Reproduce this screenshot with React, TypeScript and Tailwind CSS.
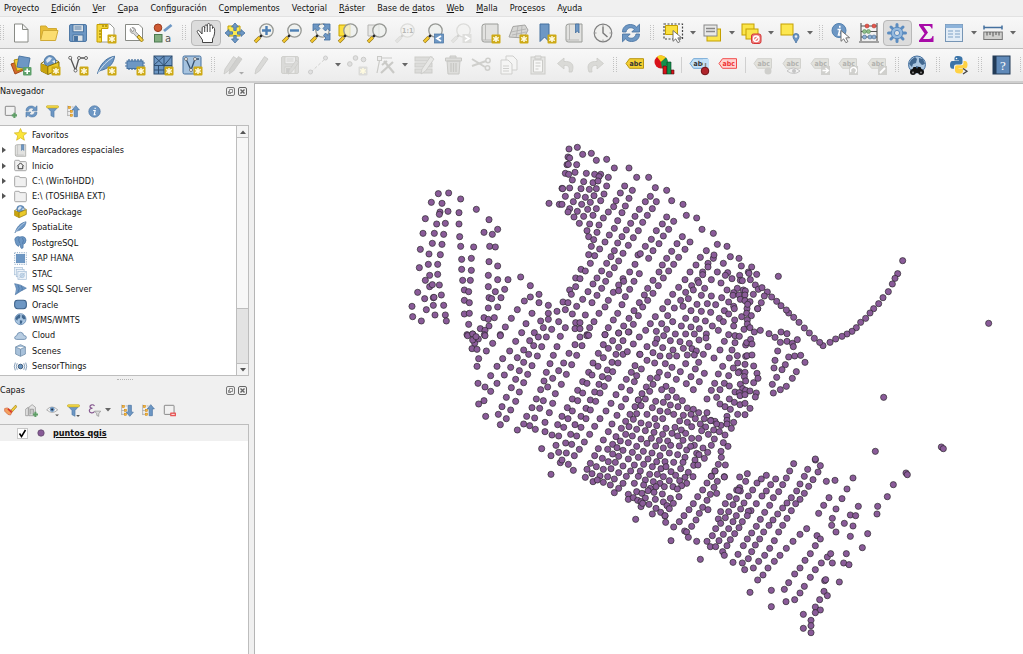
import React from "react";
import clsx from "clsx";

const BLUE = "#6d97c4";
const NAVY = "#44709f";
const GOLD = "#fce94f";
const OCHRE = "#c4a000";
const GREY = "#dadad8";
const MID = "#9a9c98";

/* ---------- shared icon parts ---------- */

const NewBadge = ({ dim }: { dim?: boolean }) => (
  <g>
    <rect x="11.5" y="11.5" width="9" height="9" rx="1" fill={dim ? "#dcdcd9" : "#cda915"} stroke="none" />
    <path
      d="M16 12.9v6.2M13.2 14.4l5.6 3.2M18.800 14.4l-5.6 3.2"
      stroke="#fffbe0"
      strokeWidth="1.5"
    />
  </g>
);

const Lens = ({ dim, children }: { dim?: boolean; children?: React.ReactNode }) => (
  <g>
    <circle cx="12.5" cy="7.5" r="6.7" fill={dim ? "#f3f3f2" : "#eef0ee"} fillOpacity=".75" stroke={dim ? "#dcdcda" : "#969894"} strokeWidth="1.3" />
    <path d="M7.8 12.2l-1.8 1.8" stroke={dim ? "#d0d0ce" : "#222"} strokeWidth="2.4" />
    <path d="M5.8 14.2L1 19" stroke={dim ? "#d8d8d6" : "#8f7414"} strokeWidth="3.4" />
    <path d="M5.6 14.4L1.3 18.7" stroke={dim ? "#e4e4e2" : "#f6c92f"} strokeWidth="2.2" />
    {children}
  </g>
);

const Tag = ({ fill, line, ink }: { fill: string; line: string; ink: string }) => (
  <g>
    <path d="M1 8.500L4.500 3.700H18.500V13.300H4.500Z" fill={fill} stroke={line} />
    <text x="4.500" y="11" fontSize="7" fontWeight="700" fill={ink} fontFamily="DejaVu Sans Condensed">
      abc
    </text>
  </g>
);

const Cursor = () => (
  <path d="M10 7.5v10.8l2.7-2.4 2.2 3.8 2-1.1-2.1-3.7 3.8-.2z" fill="#fff" stroke="#666" strokeWidth=".9" />
);

const Disk = ({ dim }: { dim?: boolean }) => (
  <g stroke={dim ? "#cececb" : NAVY} strokeWidth=".9">
    <rect x="1.5" y="1.5" width="17" height="17" rx="1.5" fill={dim ? GREY : BLUE} />
    <rect x="5" y="1.8" width="10.5" height="7" fill={dim ? "#eee" : "#dfe4e8"} />
    <path d="M6.5 4h7M6.5 6h7" />
    <rect x="5" y="12" width="10" height="6.3" fill={dim ? "#eee" : "#dfe4e8"} />
    <rect x="6.5" y="13.5" width="3" height="4" fill={dim ? "#ccc" : NAVY} />
  </g>
);

const Feather = () => (
  <g>
    <path d="M1.5 18.5C4 10 9 3 18.5 1.2c-.5 6-4 11-11.5 13.6-2.2.7-4 .8-5.5 3.7z" fill={BLUE} stroke={NAVY} />
    <path d="M2 18C6 11 11 6 17.5 2" fill="none" stroke="#d9e6f2" strokeWidth=".9" />
  </g>
);

const Chip = () => (
  <g>
    <path d="M4 4v11M7 4v11M10 4v11M13 4v11M16 4v11" stroke={NAVY} strokeWidth="1.3" />
    <rect x="2" y="6" width="16" height="7.5" fill={BLUE} stroke={NAVY} />
    <path d="M0 8h2M0 11h2M18 8h2M18 11h2" stroke={NAVY} />
  </g>
);

const Funnel = ({ menu }: { menu?: boolean }) => (
  <g>
    <path d="M1 2.5H19L12.4 10V19L7.6 16.5V10Z" fill={BLUE} stroke={NAVY} strokeWidth=".8" />
    <rect x="1" y="1" width="18" height="3.5" rx="1" fill="#f2d94a" stroke={OCHRE} strokeWidth=".8" />
    {menu && <path d="M14 17h6l-3 3z" fill="#555" />}
  </g>
);

const Refresh = () => (
  <g fill={BLUE} stroke={NAVY} strokeWidth=".8">
    <path d="M1.500 9C1.500 4 5 1.500 9.500 1.500c2.600 0 4.600 1 6 2.600L18.500 1.200V9H10.800l2.600-2.700C11 3.700 6 4.200 5 9z" />
    <path d="M18.500 11c0 5-3.500 7.500-8 7.500-2.600 0-4.600-1-6-2.600L1.500 18.800V11H9.200l-2.600 2.700c2.400 2.600 7.400 2.100 8.400-2.700z" />
  </g>
);

const Box = () => (
  <g>
    <circle cx="10" cy="6.5" r="5.8" fill={BLUE} stroke={NAVY} />
    <path d="M6 5l3-3 3 1-2 3-3 2zM12 6l3-1v4z" fill="#dde8f2" />
    <path d="M1 8.5L7.5 11.5 19 7v7.5L8 19.5 1 16Z" fill="#eac92a" stroke="#7d6500" strokeWidth=".9" />
    <path d="M1 8.5L7.8 11.5V19.3L1 16Z" fill="#c9a40f" />
    <path d="M7.8 11.5V19M1 8.5l3-2M19 7l-3-2" stroke="#7d6500" strokeWidth=".9" />
  </g>
);

const Globe = () => (
  <g>
    <circle cx="10" cy="9.5" r="8.5" fill="#a9c5e0" stroke={NAVY} />
    <path d="M4 5l4-3 2 2-1 4-3 1-1 3-3-3zM12 3l4 1 2 5-3 1-3-3zM9 11l4 1-1 4-3 1z" fill="#41678f" />
  </g>
);

const Bookmark = ({ ribbon }: { ribbon?: boolean }) => (
  <g>
    <path d="M2 3.5Q2 1 5 1H18V19H4.5Q2 19 2 17Z" fill="#e2e2e0" stroke={MID} />
    <path d="M5.500 1V17M2 17H15" stroke="#b5b5b3" strokeWidth=".9" />
    {ribbon && <path d="M11.500 1h3.500v9l-1.700-2.200-1.800 2.200z" fill={BLUE} stroke={NAVY} strokeWidth=".8" />}
  </g>
);

const Pencil = ({ color = "#dadad8" }: { color?: string }) => (
  <path d="M3 19l1-5L12.5 1.5 16 4 7.5 16z" fill={color} stroke="#c9c9c6" strokeWidth=".8" />
);

const TreeArrow = ({ up }: { up?: boolean }) => (
  <g>
    <path d="M1 1v16M1 10h4M1 16h4M7 3h3" stroke="#999" />
    <g fill="#f4b63f" stroke="#c67d00" strokeWidth=".7">
      <rect x="2" y="2" width="3.5" height="3.5" />
      <rect x="5" y="8" width="3.5" height="3.5" />
      <rect x="5" y="14" width="3.5" height="3.5" />
    </g>
    <path
      d={up ? "M13.5 1l5.500 6.500h-3V18h-5V7.500H8z" : "M13.5 19l5.500-6.500h-3V2h-5v10.500H8z"}
      fill={BLUE}
      stroke={NAVY}
    />
  </g>
);

const Info = () => (
  <g>
    <circle cx="10" cy="10" r="8.8" fill={BLUE} stroke={NAVY} />
    <path d="M8 8.5h3L9.500 15h2.500M11 4.200v2" stroke="#fff" strokeWidth="1.800" fill="none" />
  </g>
);

const Folder = ({ home }: { home?: boolean }) => (
  <g>
    <path d="M1 3.5Q1 2 2.5 2H8l1 2h8.5Q19 4 19 5.5V16.5Q19 18 17.5 18h-15Q1 18 1 16.5Z" fill="#f0f0f0" stroke="#999" strokeWidth="1.3" />
    {home && <path d="M5 11l5-5 5 5M6.5 10.5V15h7v-4.5" fill="none" stroke="#333" strokeWidth="1.5" />}
  </g>
);

const Undo = () => (
  <path d="M8 3L1.5 8.5 8 14v-3.5c4-.5 6 1 5 6.5h3C19 9 15 6 8 6.5z" fill="#dadad7" stroke="#cccbc8" strokeWidth=".8" />
);

const DimTag = ({ children }: { children?: React.ReactNode }) => (
  <g>
    <Tag fill="#e2e2dd" line="#d2d2ce" ink="#b2b2af" />
    {children}
  </g>
);

/* ---------- icon table, every drawing on a 20 x 20 grid ---------- */

const icons: Record<string, React.ReactNode> = {
  page: <path d="M3.5 1H11.5L17 6.5V19H3.5ZM11.5 1V6.5H17" fill="#fff" stroke="#888a85" />,
  open: (
    <g stroke="#d0aa35">
      <path d="M1.5 16V3H7l2 2.5h8.5V8" fill="#e8bd35" />
      <path d="M1.5 17.5L4 7.5H19L16.5 17.5Z" fill="#fbdd70" />
    </g>
  ),
  save: <Disk />,
  layoutNew: (
    <g>
      <path d="M3 1h11l4 4v14H3z" fill="#fff" stroke={MID} />
      <path d="M1 1.5h11v4H5.5V19H1z" fill="#f5d63b" stroke={OCHRE} />
      <path d="M3 8h2M3 11h2M3 14h2M7 2v2M10 2v2" stroke="#7d6800" />
      <NewBadge />
    </g>
  ),
  layouts: (
    <g>
      <path d="M1.5 1.5H15l3.5 3.5V17.5H1.5Z" fill="#fff" stroke="#888a85" />
      <path d="M6.5 5.5c-1 3 .5 5 3 5l7 7.500 2-2-7-7.500c.5-2.500-1-4-3.500-4l2 2-1.500 2.500z" fill="#d7d7d5" stroke="#888" strokeWidth=".8" />
      <path d="M13 14l2-2 4.500 5-2 2z" fill="#f5cf45" stroke="#8e7200" strokeWidth=".8" />
    </g>
  ),
  styles: (
    <g>
      <circle cx="5" cy="4.8" r="3.8" fill="#cf5a33" stroke="#98391c" />
      <path d="M11 8l7.5-6" stroke={BLUE} strokeWidth="2.8" />
      <rect x="1.5" y="11.5" width="7.5" height="7.5" fill="#82ad7f" stroke="#4b7950" />
      <text x="12" y="19" fontSize="10" fill="#555" fontFamily="DejaVu Sans">a</text>
    </g>
  ),
  hand: (
    <path
      d="M6 11L3.500 8c-1.500-1.500-3 0-2 1.500L6.500 17v2.500h10V16c2-3 2.500-7 2-10.500-.3-1.600-2-1.400-2 0V3.500c0-2-2.500-2-2.500 0V2c0-2-2.700-2-2.700 0v1.500c0-2-2.600-2-2.600 0V5c0-2-2.500-2-2.500 0zM8.700 4.500V9M11.300 3.500V9M14 4V9"
      fill="#fff"
      stroke="#444"
    />
  ),
  panTo: (
    <g>
      <path d="M3 3h12v10H3z" fill={GOLD} stroke={OCHRE} />
      <path
        d="M10 0l3.5 4h-2.300v3.500h-2.400V4H6.500zM10 20l3.500-4h-2.300v-3.500h-2.400V16H6.500zM0 10l4-3.500v2.300h3.500v2.400H4v2.300zM20 10l-4-3.500v2.300h-3.500v2.400H16v2.300z"
        fill={BLUE}
        stroke={NAVY}
        strokeWidth=".8"
      />
    </g>
  ),
  zoomIn: <Lens><path d="M12.5 3v9M8 7.5h9" stroke="#4d7fb4" strokeWidth="2.4" /></Lens>,
  zoomOut: <Lens><path d="M8 7.5h9" stroke="#4d7fb4" strokeWidth="2.4" /></Lens>,
  zoomFull: (
    <Lens>
      <path d="M3 1h7L7.800 3 10 5.500 7.500 8 5.200 5.500 3 8zM20 1h-7l2.200 2L13 5.500l2.500 2.500L17.800 5.500 20 8zM20 17h-6l2-2-2.500-2.500L15.500 10l2.500 2.500L20 10z" fill={BLUE} stroke={NAVY} strokeWidth=".8" />
    </Lens>
  ),
  zoomSel: <g><path d="M1 2h11v11H1z" fill="#fde03a" stroke={OCHRE} /><Lens /></g>,
  zoomLayer: <g><path d="M1 2h11v11H1z" fill="#e8e8e6" stroke="#b5b5b3" /><Lens /></g>,
  zoomNative: (
    <Lens dim>
      <text x="7" y="10" fontSize="7" fontWeight="700" fill="#b8b8b6" fontFamily="DejaVu Sans Condensed">1:1</text>
    </Lens>
  ),
  zoomLast: (
    <Lens>
      <rect x="11.5" y="11" width="9" height="9" fill={BLUE} stroke={NAVY} strokeWidth=".7" />
      <path d="M18 13l-4 2.5 4 2.5" fill="none" stroke="#fff" strokeWidth="1.8" />
    </Lens>
  ),
  zoomNext: (
    <Lens dim>
      <rect x="11.5" y="11" width="9" height="9" fill="#dededc" />
      <path d="M14 13l4 2.5-4 2.5" fill="none" stroke="#fff" strokeWidth="1.8" />
    </Lens>
  ),
  mapNew: <g><Bookmark /><NewBadge /></g>,
  mesh3d: (
    <g>
      <path d="M1 14L5 3.5 17 2l3 5-4 8z" fill="#d6d6d4" stroke="#a5a5a3" />
      <path d="M3 9l15-3M10 3l-2 12M4 12l14-3M14 2.5l-1 12" stroke="#aaa" strokeWidth=".7" />
      <NewBadge />
    </g>
  ),
  bookmarkNew: <g><path d="M4 1H13V18.500L8.500 14 4 18.500Z" fill={BLUE} stroke={NAVY} /><NewBadge /></g>,
  bookmarks: <Bookmark ribbon />,
  clock: (
    <g fill="none">
      <circle cx="10" cy="10" r="8.8" fill="#f0f0ee" stroke="#808080" strokeWidth="1.2" />
      <path d="M10 3.5V10l4.5 4" stroke="#777" strokeWidth="1.4" />
      <path d="M10 1.5v2M10 16.5v2M1.5 10h2M16.5 10h2" stroke="#999" />
    </g>
  ),
  refresh: <Refresh />,
  select: (
    <g>
      <path d="M1 1H19.5V16H1Z" fill="none" stroke="#444" strokeWidth="1.2" strokeDasharray="2 1.5" />
      <path d="M2.5 2.5h12v9h-12z" fill="#fbe03e" stroke={OCHRE} />
      <Cursor />
    </g>
  ),
  selectForm: (
    <g>
      <rect x="5" y="6" width="13.5" height="12" fill="#fbe54a" stroke={OCHRE} />
      <rect x="2" y="2" width="13" height="11" fill="#e8e9e8" stroke="#888" />
      <path d="M4 5.5h9M4 8.5h9" stroke="#888" strokeWidth="1.3" />
    </g>
  ),
  deselect: (
    <g>
      <rect x="1" y="1" width="12" height="11" fill="#fbe54a" stroke={OCHRE} />
      <rect x="5" y="6" width="12" height="10" fill="#fbe54a" stroke={OCHRE} />
      <rect x="10.5" y="11" width="9.5" height="9.5" rx="2" fill="#ee7b7b" stroke="#d43535" />
      <circle cx="15.2" cy="15.8" r="2.8" fill="none" stroke="#fff" strokeWidth="1.3" />
      <path d="M13 18l4-4" stroke="#fff" strokeWidth="1.3" />
    </g>
  ),
  selectLoc: (
    <g>
      <rect x="1" y="1" width="12" height="11" fill="#fde74f" stroke={OCHRE} />
      <path d="M16 20c-1-3-3-4-3-6.500a3 3 0 0 1 6 0C19 16 17 17 16 20z" fill={BLUE} stroke={NAVY} strokeWidth=".8" />
      <circle cx="16" cy="13.5" r="1.2" fill="#eee" />
    </g>
  ),
  identify: (
    <g>
      <circle cx="8" cy="7.5" r="7" fill={BLUE} stroke="#5080b0" />
      <path d="M6.500 6.500h2.500L7.500 12h2M8.800 2.800v2" stroke="#fff" strokeWidth="1.600" fill="none" />
      <Cursor />
    </g>
  ),
  abacus: (
    <g fill="none">
      <path d="M2 0v18M18 0v18M2 3h16M2 8.5h16M2 14h16M0 19h20" stroke="#555" strokeWidth="1.1" />
      <g fill="#e4564b" stroke="#a5302a" strokeWidth=".5"><circle cx="8" cy="3" r="2" /><circle cx="15" cy="3" r="2" /></g>
      <g fill="#8dbd88" stroke="#4f8052" strokeWidth=".5"><circle cx="5.5" cy="8.5" r="2" /><circle cx="9.5" cy="8.5" r="2" /></g>
      <g fill="#8db0d5" stroke="#30577f" strokeWidth=".5"><circle cx="5.5" cy="14" r="2" /><circle cx="11" cy="14" r="2" /><circle cx="15" cy="14" r="2" /></g>
    </g>
  ),
  gear: (
    <g>
      <path d="M10 1.500v17M1.500 10h17M4 4l12 12M16 4L4 16" stroke="#5b8cc0" strokeWidth="3" strokeLinecap="round" />
      <circle cx="10" cy="10" r="5.8" fill="#94b9de" stroke="#5b8cc0" />
      <circle cx="10" cy="10" r="2.6" fill="#dfe3e6" stroke="#5b8cc0" />
    </g>
  ),
  sigma: <path d="M3 1H16.5V5.5H15.5C15 3.5 14 3 12 3H7.5L12 9.5 7 16H13c2 0 3-1 3.5-3h1V19H3V17.5L8.5 10.5 3 2.5Z" fill="#a80ba8" />,
  table: (
    <g>
      <rect x="1.5" y="1.5" width="17" height="17" fill="#e2ecf6" stroke="#7695b5" />
      <rect x="1.5" y="1.5" width="17" height="3.5" fill="#8db3da" />
      <path d="M4 8h5M11 8h5M4 11h5M11 11h5M4 14h5M11 14h5" stroke="#7ea1c6" strokeWidth="1.2" />
    </g>
  ),
  ruler: (
    <g>
      <path d="M1 4.5h18M1 2.5v4M19 2.5v4" stroke={NAVY} strokeWidth="1.5" />
      <rect x=".8" y="9" width="18.5" height="7.5" fill="#d0d0ce" stroke="#777" />
      <path d="M4 9v3.5M7 9v3M10 9v4.500M13 9v3M16 9v3.500" stroke="#555" />
    </g>
  ),
  tip: <path d="M2 8Q2 1 10 1T18 8 10 15L6 19V14Q2 13 2 8Z" fill="#fbe77a" stroke="#9c8720" />,
  sources: (
    <g strokeWidth=".9">
      <path d="M0 9l9-3 4 9-9 4z" fill="#d46b2c" stroke="#9c4010" />
      <path d="M3 5l9-2 3 10-9 3z" fill="#f2cc38" stroke="#a68600" />
      <path d="M8 1l11 2-2 11-11-2z" fill={BLUE} stroke={NAVY} />
      <rect x="12" y="12" width="8.5" height="8.5" rx="1" fill="#5da06a" />
      <path d="M16.2 13.5v5.500M13.500 16.200H19" stroke="#fff" strokeWidth="1.6" />
    </g>
  ),
  gpkgNew: <g><Box /><NewBadge /></g>,
  shpNew: (
    <g fill="none">
      <path d="M2.5 3l5 12.500L11 3h7" stroke="#555" strokeWidth="1.3" />
      <g fill="#fff" stroke="#666"><circle cx="2.2" cy="2.8" r="1.5" /><circle cx="11" cy="3" r="1.5" /><circle cx="18" cy="3" r="1.5" /><circle cx="7.5" cy="15.5" r="1.5" /></g>
      <NewBadge />
    </g>
  ),
  featherNew: <g><Feather /><NewBadge /></g>,
  chipNew: <g><Chip /><NewBadge /></g>,
  meshNew: (
    <g>
      <rect x="1" y="1" width="18" height="18" fill={BLUE} stroke="#2f4f72" />
      <path d="M1 10.5h18M11 1v18M1 1l10 9.5L19 1M1 10l10-9M5.500 10.5V19M1 15h10" stroke="#2f4f72" fill="none" />
      <NewBadge />
    </g>
  ),
  virtualNew: (
    <g>
      <rect x="1" y="1" width="18" height="18" rx="1.5" fill="#a6c3df" stroke={NAVY} />
      <path d="M4 4l5 11 4-11h4" fill="none" stroke="#34506e" strokeWidth="1.3" />
      <g fill="#fff" stroke="#555" strokeWidth=".7"><circle cx="4" cy="4" r="1.5" /><circle cx="9" cy="15" r="1.5" /><circle cx="13" cy="4" r="1.5" /></g>
      <NewBadge />
    </g>
  ),
  pencils: (
    <g>
      <g transform="translate(-3 0)"><Pencil /></g>
      <g transform="translate(2 0)"><Pencil color="#d0d0ce" /></g>
      <path d="M15 17h5l-2.500 2.500z" fill="#aaa" />
    </g>
  ),
  pencil: <Pencil />,
  saveEdit: <g><Disk dim /><g transform="translate(6 4) scale(.8)"><Pencil /></g></g>,
  line: (
    <g>
      <path d="M3 17L18 3" stroke="#d0d0ce" strokeDasharray="3 2" />
      <circle cx="2.5" cy="17" r="2" fill="#e2e2e2" stroke="#ccc" />
      <circle cx="17.5" cy="3" r="2" fill="#e2e2e2" stroke="#ccc" />
    </g>
  ),
  pointsNew: (
    <g fill="#e0e0e0" stroke="#cbcbc9">
      <circle cx="8.5" cy="3" r="2.3" /><circle cx="16.5" cy="4.5" r="2.3" /><circle cx="2.8" cy="9" r="2.3" />
      <NewBadge dim />
    </g>
  ),
  vertex: (
    <g fill="none" stroke="#cacac7">
      <path d="M2 18L5 3h12" strokeWidth="1.2" />
      <rect x="2.5" y="1.5" width="4" height="4" fill="#eee" />
      <path d="M9 6l10 12M18 7L6 18M7 10l5-4" strokeWidth="2.2" />
    </g>
  ),
  formEdit: (
    <g fill="#dcdcda" stroke="#cdcdca">
      <rect x="1" y="2" width="17" height="4" /><rect x="1" y="8" width="17" height="4" /><rect x="1" y="14" width="17" height="4" />
      <g transform="translate(4 0)"><Pencil color="#e8e8e6" /></g>
    </g>
  ),
  trash: (
    <g fill="#dededc" stroke="#c8c8c5">
      <path d="M4 6h13l-1 13H5zM2.5 3h16v3h-16zM7 3V1h6v2" />
      <path d="M8 8v9M10.5 8v9M13 8v9" strokeWidth="1.3" />
    </g>
  ),
  cut: (
    <g fill="none" stroke="#cfcfcc" strokeWidth="1.5">
      <path d="M1 4l13 8M1 11l14-5" strokeWidth="2" />
      <circle cx="16.5" cy="13" r="2.2" /><circle cx="17" cy="5.5" r="2.2" />
    </g>
  ),
  copy: <g fill="#f5f5f4" stroke="#cfcfcd"><path d="M7 1h7l4 4v10H7z" /><path d="M2 5h7l4 4v10H2zM4 11h6M4 13.5h6M4 16h6" /></g>,
  paste: <g fill="#e6e6e4" stroke="#cbcbc8"><rect x="3" y="2" width="14" height="17" /><path d="M5.5 5h9v12h-9z" fill="#f7f7f6" /><path d="M7 1h6v3H7zM7.5 8h5M7.5 11h5M7.5 14h3" /></g>,
  undo: <Undo />,
  redo: <g transform="translate(20 0) scale(-1 1)"><Undo /></g>,
  label: <Tag fill="#f3cf33" line="#b8960f" ink="#333" />,
  diagram: (
    <g>
      <circle cx="7" cy="7" r="6.5" fill="#d8121a" />
      <path d="M7 7L3 1.800A6.500 6.500 0 0 1 12 2.600z" fill="#f4d21f" />
      <path d="M7 7l5-4.400A6.500 6.500 0 0 1 8 13.400z" fill="#13914c" />
      <path d="M9 11h4v8H9zM17 15h3v4h-3z" fill="#d8121a" stroke="#4b0d0d" strokeWidth=".6" />
      <path d="M13 7h4v12h-4z" fill="#13914c" stroke="#073e20" strokeWidth=".6" />
    </g>
  ),
  labelPin: (
    <g>
      <Tag fill="#c3e1f8" line="#6ea6d5" ink="#333" />
      <rect x="14" y="4" width="6" height="9" fill="#c3e1f8" />
      <path d="M16.5 8v7" stroke="#888" strokeWidth="1.5" />
      <circle cx="16" cy="16" r="3.8" fill="#b0252b" stroke="#701216" />
    </g>
  ),
  labelRed: <Tag fill="#ffd3d1" line="#f24a4a" ink="#ee3333" />,
  dimPin: <DimTag><circle cx="15" cy="16" r="3.5" fill="#cfcfcc" /></DimTag>,
  dimEye: <DimTag><path d="M5 16q6-6 13 0-6 5-13 0z" fill="#f2f2f2" stroke="#c5c5c5" /><circle cx="12" cy="16" r="2" fill="#c5c5c5" /></DimTag>,
  dimMove: <DimTag><rect x="11" y="11" width="9" height="9" fill="#d0d0cd" /><path d="M12.5 15.5h5M15.5 13l3 2.500-3 2.500" stroke="#fff" strokeWidth="1.3" fill="none" /></DimTag>,
  dimRotate: <DimTag><rect x="11" y="11" width="9" height="9" fill="#d0d0cd" /><path d="M13 17a3 3 0 1 1 4 1" stroke="#fff" strokeWidth="1.4" fill="none" /></DimTag>,
  dimEdit: <DimTag><rect x="11" y="11" width="9" height="9" fill="#d0d0cd" /><path d="M13 18l5-5" stroke="#fff" strokeWidth="1.8" /></DimTag>,
  search: (
    <g>
      <Globe />
      <path d="M3.500 18l3-6h2.500l1 2 1-2h2.500l3 6z" fill="#111" />
      <circle cx="6" cy="17" r="3" fill="#111" /><circle cx="14" cy="17" r="3" fill="#111" />
      <circle cx="6" cy="17.5" r="1" fill="#888" /><circle cx="14" cy="17.5" r="1" fill="#888" />
    </g>
  ),
  python: (
    <g>
      <path d="M9 1C5.500 1 5.500 2.500 5.500 4v1.500H10V6H3.500C1.500 6 1 8 1 10s.8 3.800 2.500 3.800H5V11.500Q5 9.500 7 9.500h4.500q2 0 2-2V4C13.500 2 12 1 9 1z" fill="#3b74a8" />
      <path d="M10.500 18.500c3.500 0 3.500-1.500 3.500-3V14H9.500v-.5H16c2 0 2.500-2 2.500-4S17.700 6 16 6h-1.500v2q0 2.300-2 2.300H8q-2 0-2 2V15.500c0 2 1.500 3 4.500 3z" fill="#ffd244" />
      <circle cx="7.5" cy="3.5" r=".8" fill="#fff" />
      <path d="M14 13.500l4 2.700-4 2.800" fill="none" stroke="#444" strokeWidth="1.3" />
    </g>
  ),
  help: (
    <g>
      <rect x="2" y="1" width="17" height="18" fill="#5f89b8" stroke="#223b57" />
      <rect x="2" y="1" width="3.5" height="18" fill="#223b57" />
      <text x="9" y="14.5" fontSize="13" fill="#fff" fontFamily="Liberation Serif">?</text>
    </g>
  ),
  addLayer: (
    <g>
      <rect x="2" y="2" width="15" height="14" rx="1" fill="#f1f1f1" stroke="#808080" strokeWidth="1.4" />
      <path d="M16 12v8M12 16h8" stroke="#5f9f67" strokeWidth="3.2" />
    </g>
  ),
  removeLayer: (
    <g>
      <rect x="2" y="2" width="15" height="14" rx="1" fill="#f1f1f1" stroke="#808080" strokeWidth="1.4" />
      <rect x="11" y="13" width="9" height="6" rx="1" fill="#e75757" />
      <path d="M13 16h5" stroke="#fff" strokeWidth="1.3" />
    </g>
  ),
  funnel: <Funnel />,
  funnelMenu: <Funnel menu />,
  treeUp: <TreeArrow up />,
  treeDown: <TreeArrow />,
  info: <Info />,
  brush: (
    <g>
      <path d="M11 9L18 1.500l1.500 3L13 12z" fill="#f1cc3d" stroke="#a08010" />
      <path d="M1 7l4-1 8 5-3 6-4-1-5-5z" fill="#f2a05f" stroke="#d0603a" />
      <path d="M6 7.500l6 5.500" stroke="#d8352a" strokeWidth="2.400" />
    </g>
  ),
  groupAdd: (
    <g>
      <path d="M1 18V8l4-3v13zM6 18V5l5-4 5 4v13z" fill="#e4e4e4" stroke="#888" />
      <path d="M8 16V8h5v8" fill="#c8c8c8" stroke="#888" />
      <path d="M16 12v8M12 16h8" stroke="#5f9f67" strokeWidth="3" />
    </g>
  ),
  eye: (
    <g>
      <path d="M1 9q8-9 17 0-8 8-17 0z" fill="#f5f5f5" stroke="#888" />
      <circle cx="9.5" cy="8.5" r="3.8" fill={BLUE} /><circle cx="9.5" cy="8.5" r="1.6" fill="#1e2d3f" />
      <path d="M14 16h6l-3 3z" fill="#555" />
    </g>
  ),
  epsilon: (
    <g>
      <path d="M10 3C8 0 3 1 3 4c0 2 2 2.500 4 2.500C4 6.500 2 8 2 10.500 2 14 8 15 10 11.500" fill="none" stroke="#85588f" strokeWidth="1.8" />
      <path d="M10 11h9.500l-3 4v4l-3-1.500V15z" fill="#ddd" stroke="#888" />
    </g>
  ),
  star: <path d="M10 .8l2.700 6.300 6.800.5-5.200 4.400 1.700 6.800L10 15.100 4 18.800 5.700 12 .5 7.600l6.800-.5z" fill="#fbe53a" stroke="#cfae10" />,
  folder: <Folder />,
  home: <Folder home />,
  gpkg: <Box />,
  feather: <Feather />,
  postgres: (
    <g>
      <path d="M3 2Q6 0 9 1.500 14 0 17 2.500 20 6 17 11l-3 2v5q-3 3-4-1v-4l-2 1-1 2Q3 15 2 9 0 4 3 2z" fill={BLUE} stroke={NAVY} />
      <path d="M8 2q-2 5 1 9M13 3q3 4 0 9" fill="none" stroke={NAVY} />
    </g>
  ),
  hana: (
    <g>
      <rect x="1" y="1" width="18" height="18" fill="none" stroke="#7a9abb" strokeWidth="1.5" strokeDasharray="1.5 2" />
      <rect x="3.5" y="3.5" width="13" height="13" fill={BLUE} stroke="#5683b3" />
    </g>
  ),
  stac: (
    <g fill="#edf3f9" stroke="#a3bcd6">
      <rect x="1" y="1" width="12" height="11" /><rect x="3.5" y="4" width="12" height="11" /><rect x="6" y="7" width="13" height="12" />
      <circle cx="12.5" cy="13" r="3.5" fill="#c9dbed" /><path d="M7 18L18 8" />
    </g>
  ),
  mssql: (
    <g>
      <path d="M1 1q9 1 18 7-7 3-17 10Q6 9 1 1z" fill={BLUE} stroke={NAVY} />
      <path d="M6 2.5q4 6 0 12M11 4q3 4 1 8" fill="none" stroke={NAVY} />
    </g>
  ),
  oracle: <rect x="1" y="3.5" width="18" height="13" rx="4.500" fill={BLUE} stroke="#3a5f88" strokeWidth="1.6" />,
  globe: <Globe />,
  cloud: <path d="M4 16Q1 16 1 13.500 1 11 4 10.500 5 5 10 5q4 0 5 5 4 0 4 3 0 3-3 3z" fill="#b8cde2" stroke="#6183a8" strokeWidth="1.2" />,
  cube: <path d="M10 1l7.500 3.500v11L10 19l-7.500-3.500v-11zM2.500 4.500L10 8l7.500-3.500M10 8v11" fill="#a8c1da" stroke="#6e8ba8" strokeWidth="1.2" />,
  sensor: (
    <g fill="none" stroke="#6b88a8" strokeWidth="1.3">
      <circle cx="10" cy="10" r="3.5" fill={BLUE} stroke="#2b4766" />
      <path d="M5 5q-3 5 0 10M15 5q3 5 0 10M2 4q-3 6 0 12M18 4q3 6 0 12" />
    </g>
  ),
};

const Icon = ({ name, className = "size-5" }: { name: string; className?: string }) => (
  <svg viewBox="0 0 20 20" className={clsx("shrink-0 overflow-visible", className)} aria-hidden="true">
    {icons[name]}
  </svg>
);

/* ---------- toolbars ---------- */

const Caret = () => (
  <span className="flex w-[11px] shrink-0 items-center justify-center">
    <svg viewBox="0 0 6 4" className="h-1 w-1.5">
      <path d="M0 0h6L3 3.5z" fill="#666" />
    </svg>
  </span>
);

const ToolButton = ({ name, active }: { name: string; active?: boolean }) => (
  <button
    type="button"
    aria-label={name}
    aria-pressed={active}
    className={clsx(
      "flex h-[26px] min-w-0 flex-1 items-center justify-center rounded-sm",
      active && "border border-[#b8b8b8] bg-[#dcdcdc]"
    )}
  >
    <Icon name={name} />
  </button>
);

const MenuTool = ({ name }: { name: string }) => (
  <button type="button" aria-label={name} className="flex h-[26px] w-[39px] shrink-0 items-center">
    <span className="flex flex-1 justify-center">
      <Icon name={name} />
    </span>
    <Caret />
  </button>
);

const Group = ({ names, active, className }: { names: string[]; active?: string; className: string }) => (
  <div className={clsx("flex shrink-0", className)}>
    {names.map((n) => (
      <ToolButton key={n} name={n} active={n === active} />
    ))}
  </div>
);

const Grip = ({ className = "mx-[5px]" }: { className?: string }) => (
  <svg viewBox="0 0 4 16" className={clsx("h-4 w-1 shrink-0", className)} aria-hidden="true">
    <path d="M.5 0v16M3.5 0v16" stroke="#c2c2c2" strokeDasharray="1 1" />
  </svg>
);

const Sep = () => <span className="mx-[3px] h-4 w-px shrink-0 bg-[#d0d0d0]" />;

const barClass =
  "flex shrink-0 items-center overflow-hidden border-b border-[#bdbdbd] bg-gradient-to-b from-[#f8f8f8] to-[#ececec]";

const MainToolbar = () => (
  <div className={clsx(barClass, "h-[33px] border-t border-t-[#e2e2e2]")}>
    <Grip className="mr-[3px]" />
    <Group className="w-[170px]" names={["page", "open", "save", "layoutNew", "layouts", "styles"]} />
    <Grip />
    <Group
      className="w-[454px]"
      active="hand"
      names={[
        "hand", "panTo", "zoomIn", "zoomOut", "zoomFull", "zoomSel", "zoomLayer", "zoomNative",
        "zoomLast", "zoomNext", "mapNew", "mesh3d", "bookmarkNew", "bookmarks", "clock", "refresh",
      ]}
    />
    <Grip />
    <MenuTool name="select" />
    <MenuTool name="selectForm" />
    <MenuTool name="deselect" />
    <MenuTool name="selectLoc" />
    <Grip className="mx-1" />
    <Group className="w-[113px]" active="gear" names={["identify", "abacus", "gear", "sigma"]} />
    <MenuTool name="table" />
    <MenuTool name="ruler" />
    <MenuTool name="tip" />
  </div>
);

const EditToolbar = () => (
  <div className={clsx(barClass, "h-[34px] border-b-2 border-b-[#cfcfcf]")}>
    <Grip className="mr-[3px]" />
    <Group
      className="w-[199px]"
      names={["sources", "gpkgNew", "shpNew", "featherNew", "chipNew", "meshNew", "virtualNew"]}
    />
    <Grip />
    <Group className="w-[84px]" names={["pencils", "pencil", "saveEdit"]} />
    <MenuTool name="line" />
    <Group className="w-7" names={["pointsNew"]} />
    <MenuTool name="vertex" />
    <Group
      className="w-[199px]"
      names={["formEdit", "trash", "cut", "copy", "paste", "undo", "redo"]}
    />
    <Grip className="mx-1" />
    <Group className="w-[57px]" names={["label", "diagram"]} />
    <Sep />
    <Group className="w-[57px]" names={["labelPin", "labelRed"]} />
    <Sep />
    <Group className="w-[142px]" names={["dimPin", "dimEye", "dimMove", "dimRotate", "dimEdit"]} />
    <Grip className="mx-1" />
    <Group className="w-7" names={["search"]} />
    <Grip />
    <Group className="w-7" names={["python"]} />
    <Grip />
    <Group className="w-7" names={["help"]} />
    <Grip />
  </div>
);

/* ---------- menu ---------- */

// "_" stands before the mnemonic letter
const menus = [
  "Pro_yecto", "_Edición", "_Ver", "_Capa", "Con_figuración", "C_omplementos", "Vect_orial",
  "_Ráster", "Base de _datos", "_Web", "_Malla", "Pro_cesos", "A_yuda",
];

const MenuBar = () => (
  <nav className="flex h-4 shrink-0 items-center gap-3 pl-1">
    {menus.map((m) => {
      const [before, rest] = m.split("_");
      return (
        <button key={m} type="button" className="whitespace-nowrap">
          {before}
          <span className="underline">{rest[0]}</span>
          {rest.slice(1)}
        </button>
      );
    })}
  </nav>
);

/* ---------- docks ---------- */

const DockTitle = ({ title }: { title: string }) => (
  <div className="flex h-4 shrink-0 items-center">
    <h2 className="flex-1">{title}</h2>
    <div className="flex gap-[3px] pr-0.5">
      <button type="button" aria-label="Flotar" className="size-[9px]">
        <svg viewBox="0 0 9 9" fill="none" stroke="#777">
          <rect x=".5" y=".5" width="8" height="8" rx="1.5" />
          <path d="M3.5 2.5h3v3h-3zM2.5 4v2.5H5" strokeWidth=".8" />
        </svg>
      </button>
      <button type="button" aria-label="Cerrar" className="size-[9px]">
        <svg viewBox="0 0 9 9" fill="none" stroke="#666">
          <rect x=".5" y=".5" width="8" height="8" rx="1.5" />
          <path d="M2.5 2.5l4 4M6.5 2.5l-4 4" strokeWidth="1.4" />
        </svg>
      </button>
    </div>
  </div>
);

const DockTools = ({ names, menuAfter }: { names: string[]; menuAfter?: string }) => (
  <div className="mb-0.5 flex h-6 shrink-0 items-center gap-2 pl-1">
    {names.map((n) => (
      <button key={n} type="button" aria-label={n} className="flex items-center gap-px">
        <Icon name={n} className="size-[13px]" />
        {n === menuAfter && <Caret />}
      </button>
    ))}
  </div>
);

const treeItems: { label: string; icon: string; open?: boolean }[] = [
  { label: "Favoritos", icon: "star" },
  { label: "Marcadores espaciales", icon: "bookmarks", open: true },
  { label: "Inicio", icon: "home", open: true },
  { label: "C:\\ (WinToHDD)", icon: "folder", open: true },
  { label: "E:\\ (TOSHIBA EXT)", icon: "folder", open: true },
  { label: "GeoPackage", icon: "gpkg" },
  { label: "SpatiaLite", icon: "feather" },
  { label: "PostgreSQL", icon: "postgres" },
  { label: "SAP HANA", icon: "hana" },
  { label: "STAC", icon: "stac" },
  { label: "MS SQL Server", icon: "mssql" },
  { label: "Oracle", icon: "oracle" },
  { label: "WMS/WMTS", icon: "globe" },
  { label: "Cloud", icon: "cloud" },
  { label: "Scenes", icon: "cube" },
  { label: "SensorThings", icon: "sensor" },
];

const Scrollbar = () => (
  <div className="flex w-3 shrink-0 flex-col border-l border-[#bdbdbd] bg-[#e3e3e3]">
    <button type="button" aria-label="Subir" className="flex h-3 items-center justify-center border-b border-[#bdbdbd] bg-[#f4f4f4]">
      <svg viewBox="0 0 6 4" className="h-1 w-1.5"><path d="M0 4h6L3 .5z" fill="#555" /></svg>
    </button>
    <div className="h-[171px] border-b border-[#bdbdbd] bg-[#f7f7f7]" />
    <div className="flex-1" />
    <button type="button" aria-label="Bajar" className="flex h-3 items-center justify-center border-t border-[#bdbdbd] bg-[#f4f4f4]">
      <svg viewBox="0 0 6 4" className="h-1 w-1.5"><path d="M0 0h6L3 3.5z" fill="#555" /></svg>
    </button>
  </div>
);

const Browser = () => (
  <section className="flex shrink-0 flex-col">
    <DockTitle title="Navegador" />
    <DockTools names={["addLayer", "refresh", "funnel", "treeUp", "info"]} />
    <div className="flex h-[251px] border border-l-0 border-[#bdbdbd] bg-white">
      <ul className="flex min-w-0 flex-1 flex-col py-px">
        {treeItems.map((t) => (
          <li key={t.label} className="flex flex-1 items-center">
            <span className="w-[14px] pl-0.5">
              {t.open && (
                <svg viewBox="0 0 4 6" className="h-1.5 w-1">
                  <path d="M0 0l4 3-4 3z" fill="#555" />
                </svg>
              )}
            </span>
            <Icon name={t.icon} className="size-[13px]" />
            <span className="pl-[5px] whitespace-nowrap">{t.label}</span>
          </li>
        ))}
      </ul>
      <Scrollbar />
    </div>
  </section>
);

const Layers = () => (
  <section className="flex min-h-0 flex-1 flex-col">
    <DockTitle title="Capas" />
    <DockTools
      names={["brush", "groupAdd", "eye", "funnelMenu", "epsilon", "treeDown", "treeUp", "removeLayer"]}
      menuAfter="epsilon"
    />
    <div className="flex-1 border border-b-0 border-l-0 border-[#bdbdbd] bg-white">
      <label className="flex h-4 items-center bg-[#f0f0f0] pl-[17px]">
        <span className="relative size-[11px]">
          <input
            type="checkbox"
            defaultChecked
            className="peer block size-[11px] appearance-none border border-[#c8c8c8] bg-white"
          />
          <svg viewBox="0 0 11 11" className="pointer-events-none absolute inset-0 hidden peer-checked:block">
            <path d="M2.5 5.5l2 3 4-6.500" fill="none" stroke="#000" strokeWidth="1.5" />
          </svg>
        </span>
        <svg viewBox="0 0 8 8" className="ml-[9px] size-2">
          <circle cx="4" cy="4" r="3.2" fill="#875a97" stroke="#5c4565" strokeWidth=".7" />
        </svg>
        <span className="pl-2 font-bold underline">puntos qgis</span>
      </label>
    </div>
  </section>
);

/* ---------- map ---------- */

// Survey blocks: x,y pairs in thirds of a pixel, counted from the block's corner
const blocks: { x: number; y: number; pts: string }[] = [
  {
    x: 400,
    y: 135,
    pts: `115,176 146,174 182,192 94,202 126,205 120,231 118,238 144,229 177,233 76,251 110,267 136,265 177,267
229,223 267,254 293,283 277,298 252,292 69,295 103,295 131,298 179,305 97,325 126,328 182,334 221,336 269,334
286,336 61,343 87,357 121,359 185,373 214,370 267,380 293,393 85,388 113,388 58,398 185,403 214,406 89,421
113,418 76,436 188,436 211,436 265,421 293,434 324,434 362,426 89,455 97,449 118,450 193,465 206,470 265,455
286,470 314,463 391,452 53,472 74,491 100,488 102,487 124,480 193,496 208,503 267,488 275,491 303,488 373,498
391,486 417,478 417,503 36,514 79,524 100,511 131,511 265,519 293,516 352,524 38,545 64,558 105,540 136,540
139,558 193,537 208,535 252,548 265,553 283,548 334,550 396,535 445,511 445,535 445,553 471,529 422,558 206,568
241,581 267,573 255,586 316,576 378,566 430,578 455,583 476,560 201,599 218,597 253,599 301,599 365,593 403,593
447,205 478,208`,
  },
  {
    x: 560,
    y: 135,
    pts: `27,42 52,37 68,58 94,55 24,66 29,69 109,76 140,73 21,89 25,88 50,89 163,99 207,99 16,115 26,118 45,112
79,115 104,118 122,118 117,125 37,135 71,140 99,143 114,138 145,127 230,127 266,127 6,160 8,161 29,159 63,161 88,163
109,161 140,153 194,153 217,166 286,158 320,166 16,184 52,182 76,187 102,182 132,177 181,174 207,190 271,184
335,197 369,208 6,208 40,200 65,208 91,202 122,197 168,197 196,213 256,200 289,200 29,221 24,231 52,229 83,223
109,221 161,215 238,223 277,221 42,246 71,244 99,241 130,249 145,231 186,233 225,244 262,241 320,246 379,241
410,249 58,265 89,267 117,270 173,257 212,265 248,262 307,267 341,259 426,283 460,295 81,287 111,292 163,280
199,285 235,287 289,287 326,283 86,305 101,314 148,300 186,305 220,308 310,303 367,305 94,334 135,321 173,324
205,331 274,313 297,326 351,326 390,321 472,328 501,334 86,359 104,362 119,342 163,347 189,355 256,334 279,347
335,349 375,343 439,347 91,385 153,365 176,378 234,360 241,356 266,370 320,370 356,367 421,367 460,370 462,360
511,365 537,370 63,403 76,408 140,385 163,398 225,388 307,390 341,388 408,390 444,385 444,396 490,385 544,393
575,396 47,429 60,431 125,408 148,418 209,411 238,416 297,411 326,408 390,411 428,411 428,419 472,411 503,413
496,421 565,411 567,415 590,418 111,429 137,439 189,431 191,439 222,439 279,436 310,429 375,434 413,436 416,443 454,434
516,431 539,421 541,436 547,437 571,434 47,455 99,447 125,460 176,450 263,460 295,452 356,457 395,452 400,465
434,460 483,444 501,465 532,460 550,465 586,450 29,465 34,478 84,470 111,481 160,472 176,467 209,463 253,480
279,475 338,478 377,472 424,481 454,483 485,488 521,473 519,481 537,480 556,468 555,480 580,478 595,463 68,493 145,496
196,485 263,496 323,501 362,496 385,491 506,501 541,493 555,497 570,500 9,501 24,503 96,503 50,514 135,516
186,509 238,503 248,516 308,521 343,519 369,514 411,508 442,506 467,509 521,514 523,521 561,521 563,508 593,521 16,524
37,537 76,540 117,535 173,535 222,527 235,542 286,545 323,542 338,560 393,527 424,529 452,532 493,527 506,537
545,545 560,535 574,542 47,563 60,563 102,560 160,555 207,550 271,566 305,566 377,550 408,553 436,558 478,550
490,560 524,555 562,555 562,567 16,578 45,581 60,581 89,578 145,578 191,573 220,568 257,586 289,589 320,583
364,573 393,576 418,581 457,573 475,586 521,573 552,583 570,578 583,591 81,599 135,599 176,594 207,591 346,597
377,597 403,597 439,597 506,599`,
  },
  {
    x: 440,
    y: 320,
    pts: `83,47 98,42 115,57 104,70 98,60 108,50 135,47 181,47 158,70 96,86 111,88 139,93 227,64 269,62 295,51 319,51
361,49 281,77 305,80 351,80 209,93 251,90 266,103 292,108 340,106 387,100 410,106 116,116 188,116 232,113
251,127 330,131 371,129 395,134 111,139 171,139 212,142 238,152 276,137 319,157 356,152 379,163 152,167 193,165
227,178 263,163 312,183 338,175 364,193 114,190 171,190 251,188 323,201 135,201 152,214 214,203 238,216 302,209
346,221 199,232 289,237 310,242 338,250 132,242 116,252 186,260 227,244 212,270 276,263 299,265 328,278 137,289
175,283 199,296 181,314 260,289 284,294 315,307 251,312 269,317 286,328 315,335 232,330 336,345 356,348 305,386
348,376 356,397 333,407 333,463 361,428 366,420 385,433 400,451 377,369 395,373 379,399 403,407 418,388 433,366
420,51 441,47 446,46 495,44 536,39 565,36 580,72 405,74 426,77 490,74 505,85 518,62 549,62 475,100 490,113
528,103 549,103 562,95 536,82 459,129 474,139 516,127 534,129 585,137 599,103 446,157 456,165 502,150 518,155 574,157
590,167 428,185 441,190 487,170 505,175 559,178 583,185 413,211 428,219 477,193 493,199 544,201 570,211 397,237
413,242 464,216 480,219 528,224 557,237 595,240 382,263 397,273 451,240 467,244 513,250 544,260 585,260 366,289
384,296 438,265 451,270 498,273 531,286 570,283 580,298 590,281 353,314 371,322 423,289 438,296 480,296 516,312
557,304 405,314 423,322 464,319 505,335 544,325 567,320 590,328 392,343 410,348 449,343 490,360 528,350 541,363
557,343 577,348 475,386 503,388 518,373 531,383 549,391 565,368 590,379 464,407 487,415 518,402 536,409 565,417
577,397 595,412 451,430 469,440 505,425 526,427 549,438 583,435 441,448 456,461 490,448 513,446 436,472 480,468
503,470 536,458 572,453 459,485 472,480 490,487 523,477 559,469 595,469 511,495 549,490 583,490 523,518 536,505
565,523 590,515 565,538 580,533 593,541 587,598`,
  },
  {
    x: 600,
    y: 320,
    pts: `118,51 171,57 191,47 211,62 240,65 268,70 297,60 318,54 373,64 405,47 405,68 418,49 437,75 440,68 452,58 456,72
141,80 166,70 188,83 219,90 250,85 276,86 289,93 324,80 360,90 396,90 120,103 159,98 180,108 208,108 230,108 262,105
283,105 310,103 342,114 388,114 412,107 437,109 441,107 456,105 141,121 164,129 196,131 216,142 257,131 296,127 368,139
400,144 413,129 435,133 461,138 178,157 203,165 241,155 286,147 273,170 313,160 355,162 386,167 418,155 415,158 435,157
471,160 124,147 151,175 172,173 229,178 259,191 298,185 344,190 373,190 388,198 421,193 433,170 437,183 461,188
474,175 139,201 159,193 198,199 185,209 216,211 280,209 334,211 360,209 405,216 428,206 437,211 469,219 466,231
450,213 126,221 149,214 203,231 229,232 321,237 350,232 388,237 418,218 420,227 435,224 115,240 136,237 167,244 190,247
247,242 211,255 234,260 360,252 375,260 403,247 420,254 435,250 450,265 123,257 157,263 180,273 203,275 262,264
280,268 296,278 321,278 391,268 413,283 435,284 141,283 165,296 188,296 221,283 239,303 250,286 273,283 286,296
313,296 333,301 345,304 332,302 381,289 381,301 401,307 123,309 146,314 170,317 198,325 225,322 262,307 275,320 301,312
317,321 363,316 341,330 350,312 381,312 394,325 136,332 162,337 188,343 216,340 244,330 257,340 305,332 325,343 358,335
375,345 123,357 154,355 178,361 203,363 233,348 249,361 275,355 296,355 343,357 334,376 370,368 384,379 141,370
167,378 190,384 212,376 238,378 260,390 283,376 272,379 309,384 323,397 363,394 130,394 156,399 180,407 208,399
233,404 255,412 290,400 297,404 313,415 364,412 144,417 170,425 195,425 221,427 249,427 285,420 281,436 294,435
355,433 376,435 131,433 157,440 183,446 198,440 213,455 242,446 265,457 345,453 121,453 149,463 172,463 190,470
227,466 255,472 279,470 334,468 373,470 136,480 160,485 180,490 208,482 239,482 260,490 131,495 151,505 168,500 193,500
219,500 245,497 126,520 144,512 162,517 187,522 211,535 237,530 232,507 136,534 166,538 190,546 123,545 123,560
128,550 147,553 168,565 220,550 201,557 208,566 182,577 157,582 195,588`,
  },
  {
    x: 640,
    y: 460,
    pts: `253,51 225,33 214,49 232,64 201,69 222,82 188,90 211,103 230,100 173,110 201,121 160,131 188,142 204,149
147,149 178,160 132,167 168,180 118,185 155,199 101,201 134,213 140,216 145,232 77,187 75,167 93,242 170,244
201,244 181,298 299,51 322,41 317,64 299,83 290,90 301,93 295,91 351,69 364,57 379,46 407,57 392,74 338,90 379,93
325,108 366,108 349,131 268,110 256,131 279,134 289,116 312,129 242,155 266,155 289,167 302,147 333,152 325,154 322,167
235,177 242,190 256,173 279,185 307,185 227,206 250,223 266,206 297,203 217,227 237,242 271,239 284,221 211,260
227,260 248,275 253,286 261,257 279,307 294,283 310,257 322,237 335,219 349,199 361,178 374,157 389,136 400,113
416,95 428,74 439,54 449,33 461,11 307,309 314,329 325,296 335,275 346,255 359,237 371,216 387,196 399,180 413,162
428,144 441,129 454,113 470,93 480,72 493,49 503,28 526,0 541,17 534,36 519,59 506,79 493,100 480,118 467,131
454,152 441,175 428,196 416,216 403,242 389,265 374,286 356,304 340,324 353,360 369,345 384,324 403,304 420,286
439,265 459,244 480,223 500,206 531,227 541,237 526,257 511,281 495,301 480,324 464,342 446,368 433,388 394,391
330,397 394,440 438,425 464,419 480,399 493,379 511,352 526,329 544,309 562,291 572,281 577,309 619,281 611,309
627,314 598,366 554,362 557,359 552,394 562,407 539,419 526,441 541,450 526,458 490,463 513,481 513,497 490,505
513,518 559,64 585,61 639,54 621,87 606,116 567,113 551,136 536,160 588,147 655,139 713,139 711,162 631,165
647,167 577,175 575,196 613,190 639,198 588,216 631,229 683,221 667,263`,
  },
  {
    x: 740,
    y: 240,
    pts: `115,109 488,62 473,101 465,115 457,132 445,155 429,173 416,191 401,206 390,219 377,235 362,247 349,263
336,274 321,282 306,289 287,297 270,307 249,317 239,307 223,295 208,279 193,264 177,247 161,232 146,219 139,210
123,197 110,184 95,171 82,156 66,143 73,168 64,188 53,206 61,271 87,281 105,292 123,276 141,281 121,307 141,304
157,310 160,320 172,299 113,333 105,361 102,384 146,351 164,348 182,346 195,367 136,374 126,389 169,395 157,415
110,412 97,433 139,439 121,449 100,459 431,472 406,634 604,621 610,626 226,657 498,699 502,704 460,734 442,770
746,250`,
  },
];

const points = blocks.flatMap((b) =>
  b.pts.split(/\s+/).map((p) => {
    const [x, y] = p.split(",").map(Number);
    return [b.x + x / 3, b.y + y / 3];
  })
);

const MapCanvas = () => (
  <main className="min-w-0 flex-1 overflow-hidden border-t border-l border-[#b5b5b5] bg-white">
    <svg className="block h-full w-full" role="img" aria-label="puntos qgis">
      <g transform="translate(-255 -84)" fill="#8a5b99" stroke="#232323" strokeOpacity=".8" strokeWidth=".8">
        {points.map(([x, y], i) => (
          <circle key={i} cx={x} cy={y} r="3.1" />
        ))}
      </g>
    </svg>
  </main>
);

export default function App() {
  return (
    <div className="flex h-screen flex-col overflow-hidden bg-[#f0f0f0] font-['DejaVu_Sans_Condensed','DejaVu_Sans',sans-serif] text-[9px] leading-3 text-[#111]">
      <MenuBar />
      <MainToolbar />
      <EditToolbar />
      <div className="flex min-h-0 flex-1">
        <aside className="flex w-[249px] shrink-0 flex-col">
          <Browser />
          <div className="flex h-1.5 shrink-0 items-center justify-center">
            <span className="w-4 border-t border-dotted border-[#b5b5b5]" />
          </div>
          <Layers />
        </aside>
        <div className="w-[5px] shrink-0" />
        <MapCanvas />
      </div>
    </div>
  );
}
